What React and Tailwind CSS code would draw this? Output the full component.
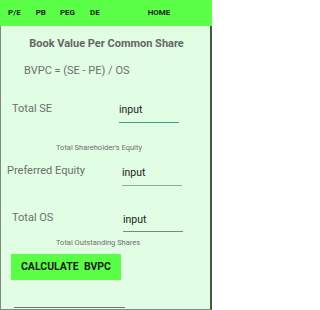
export default function App() {
  const font = { fontFamily: 'Roboto, "Noto Sans", sans-serif' };
  return (
    <div style={font} className="w-[212px] h-[310px] flex flex-col bg-[#e1fde3] overflow-hidden">
      <div className="h-[26px] shrink-0 bg-[#5cff47] flex items-center text-[8px] font-bold text-[#1c1c1c]">
        <span className="ml-[8px]">P/E</span>
        <span className="ml-[15px]">PB</span>
        <span className="ml-[14px]">PEG</span>
        <span className="ml-[15px]">DE</span>
        <span className="ml-[48px]">HOME</span>
      </div>
      <div className="flex-1 flex flex-col border-l border-l-[#7d8a7e] border-r-2 border-r-[#4a524b] border-b border-b-[#7d8a7e]">
        <div className="mt-[11px] text-center text-[11px] leading-[14px] font-bold text-[#666666] pl-[2px]">
          Book Value Per Common Share
        </div>
        <div className="mt-[12px] pl-[23px] text-[11px] leading-[16px] text-[#6e6e6e]">
          BVPC = (SE - PE) / OS
        </div>
        <div className="mt-[22px] flex items-start">
          <div className="w-[118px] pl-[11px] text-[11px] leading-[16px] text-[#6e6e6e]">Total SE</div>
          <div className="w-[60px] pt-[1px]">
            <div className="text-[10.5px] leading-[15px] text-[#222]">input</div>
            <div className="mt-[5px] h-[1px] bg-[#3a9c8c]"></div>
          </div>
        </div>
        <div className="mt-[20px] pl-[55px] text-[7.5px] leading-[9px] text-[#707070]">
          Total Shareholder's Equity
        </div>
        <div className="mt-[11px] flex items-start">
          <div className="w-[121px] pl-[6px] text-[11px] leading-[16px] text-[#6e6e6e]">Preferred Equity</div>
          <div className="w-[60px] pt-[2px]">
            <div className="text-[10.5px] leading-[15px] text-[#222]">input</div>
            <div className="mt-[5px] h-[1px] bg-[#9aa59b]"></div>
          </div>
        </div>
        <div className="mt-[24px] flex items-start">
          <div className="w-[122px] pl-[11px] text-[11px] leading-[16px] text-[#6e6e6e]">Total OS</div>
          <div className="w-[60px] pt-[2px]">
            <div className="text-[10.5px] leading-[15px] text-[#222]">input</div>
            <div className="mt-[4px] h-[1px] bg-[#7e877f]"></div>
          </div>
        </div>
        <div className="mt-[6px] pl-[55px] text-[7.5px] leading-[9px] text-[#707070]">
          Total Outstanding Shares
        </div>
        <div className="mt-[7px] ml-[10px] w-[110px] h-[26px] bg-[#5cff47] flex items-center justify-center text-[10.5px] font-bold text-[#1a1a1a] whitespace-pre">
          CALCULATE  BVPC
        </div>
        <div className="mt-[27px] ml-[13px] w-[111px] h-[1px] bg-[#6f776f]"></div>
      </div>
    </div>
  );
}
